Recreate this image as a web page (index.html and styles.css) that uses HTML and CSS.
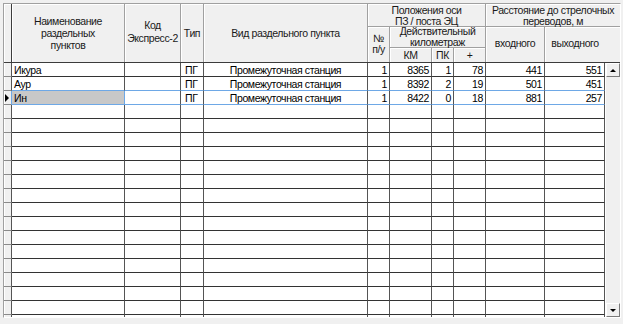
FILE: index.html
```html
<!DOCTYPE html>
<html lang="ru">
<head>
<meta charset="utf-8">
<title>Раздельные пункты</title>
<link rel="stylesheet" href="styles.css">
</head>
<body>
<div class="frame">
  <div class="head">
    <div class="hc h-ind"></div>
    <div class="hc h-name">Наименование<br>раздельных<br>пунктов</div>
    <div class="hc h-code">Код<br>Экспресс-2</div>
    <div class="hc h-type">Тип</div>
    <div class="hc h-kind">Вид раздельного пункта</div>
    <div class="hc h-pos">Положения оси<br>ПЗ / поста ЭЦ</div>
    <div class="hc h-num">№<br>п/у</div>
    <div class="hc h-km">Действительный<br>километраж</div>
    <div class="hc h-k">КМ</div>
    <div class="hc h-pk">ПК</div>
    <div class="hc h-plus">+</div>
    <div class="hc h-dist">Расстояние до стрелочных<br>переводов, м</div>
    <div class="hc h-in">входного</div>
    <div class="hc h-out">выходного</div>
  </div>
  <div class="body">
    <div class="rows">
      <div class="row">
        <div class="c ind"></div><div class="c">Икура</div><div class="c"></div><div class="c t">ПГ</div><div class="c m">Промежуточная станция</div><div class="c r">1</div><div class="c r">8365</div><div class="c r">1</div><div class="c r">78</div><div class="c r">441</div><div class="c r">551</div>
      </div>
      <div class="row pre-sel">
        <div class="c ind"></div><div class="c">Аур</div><div class="c"></div><div class="c t">ПГ</div><div class="c m">Промежуточная станция</div><div class="c r">1</div><div class="c r">8392</div><div class="c r">2</div><div class="c r">19</div><div class="c r">501</div><div class="c r">451</div>
      </div>
      <div class="row sel">
        <div class="c ind cur"></div><div class="c focus">Ин</div><div class="c"></div><div class="c t">ПГ</div><div class="c m">Промежуточная станция</div><div class="c r">1</div><div class="c r">8422</div><div class="c r">0</div><div class="c r">18</div><div class="c r">881</div><div class="c r">257</div>
      </div>
      <div class="row"><div class="c ind"></div><div class="c"></div><div class="c"></div><div class="c"></div><div class="c"></div><div class="c"></div><div class="c"></div><div class="c"></div><div class="c"></div><div class="c"></div><div class="c"></div></div>
      <div class="row"><div class="c ind"></div><div class="c"></div><div class="c"></div><div class="c"></div><div class="c"></div><div class="c"></div><div class="c"></div><div class="c"></div><div class="c"></div><div class="c"></div><div class="c"></div></div>
      <div class="row"><div class="c ind"></div><div class="c"></div><div class="c"></div><div class="c"></div><div class="c"></div><div class="c"></div><div class="c"></div><div class="c"></div><div class="c"></div><div class="c"></div><div class="c"></div></div>
      <div class="row"><div class="c ind"></div><div class="c"></div><div class="c"></div><div class="c"></div><div class="c"></div><div class="c"></div><div class="c"></div><div class="c"></div><div class="c"></div><div class="c"></div><div class="c"></div></div>
      <div class="row"><div class="c ind"></div><div class="c"></div><div class="c"></div><div class="c"></div><div class="c"></div><div class="c"></div><div class="c"></div><div class="c"></div><div class="c"></div><div class="c"></div><div class="c"></div></div>
      <div class="row"><div class="c ind"></div><div class="c"></div><div class="c"></div><div class="c"></div><div class="c"></div><div class="c"></div><div class="c"></div><div class="c"></div><div class="c"></div><div class="c"></div><div class="c"></div></div>
      <div class="row"><div class="c ind"></div><div class="c"></div><div class="c"></div><div class="c"></div><div class="c"></div><div class="c"></div><div class="c"></div><div class="c"></div><div class="c"></div><div class="c"></div><div class="c"></div></div>
      <div class="row"><div class="c ind"></div><div class="c"></div><div class="c"></div><div class="c"></div><div class="c"></div><div class="c"></div><div class="c"></div><div class="c"></div><div class="c"></div><div class="c"></div><div class="c"></div></div>
      <div class="row"><div class="c ind"></div><div class="c"></div><div class="c"></div><div class="c"></div><div class="c"></div><div class="c"></div><div class="c"></div><div class="c"></div><div class="c"></div><div class="c"></div><div class="c"></div></div>
      <div class="row"><div class="c ind"></div><div class="c"></div><div class="c"></div><div class="c"></div><div class="c"></div><div class="c"></div><div class="c"></div><div class="c"></div><div class="c"></div><div class="c"></div><div class="c"></div></div>
      <div class="row"><div class="c ind"></div><div class="c"></div><div class="c"></div><div class="c"></div><div class="c"></div><div class="c"></div><div class="c"></div><div class="c"></div><div class="c"></div><div class="c"></div><div class="c"></div></div>
      <div class="row"><div class="c ind"></div><div class="c"></div><div class="c"></div><div class="c"></div><div class="c"></div><div class="c"></div><div class="c"></div><div class="c"></div><div class="c"></div><div class="c"></div><div class="c"></div></div>
      <div class="row"><div class="c ind"></div><div class="c"></div><div class="c"></div><div class="c"></div><div class="c"></div><div class="c"></div><div class="c"></div><div class="c"></div><div class="c"></div><div class="c"></div><div class="c"></div></div>
      <div class="row"><div class="c ind"></div><div class="c"></div><div class="c"></div><div class="c"></div><div class="c"></div><div class="c"></div><div class="c"></div><div class="c"></div><div class="c"></div><div class="c"></div><div class="c"></div></div>
      <div class="row"><div class="c ind"></div><div class="c"></div><div class="c"></div><div class="c"></div><div class="c"></div><div class="c"></div><div class="c"></div><div class="c"></div><div class="c"></div><div class="c"></div><div class="c"></div></div>
      <div class="row"><div class="c ind"></div><div class="c"></div><div class="c"></div><div class="c"></div><div class="c"></div><div class="c"></div><div class="c"></div><div class="c"></div><div class="c"></div><div class="c"></div><div class="c"></div></div>
    </div>
    <div class="sb">
      <div class="sb-btn"><span class="arr-up"></span></div>
      <div class="sb-track"></div>
      <div class="sb-btn"><span class="arr-down"></span></div>
    </div>
  </div>
</div>
</body>
</html>
```

FILE: styles.css
```css
* { box-sizing: border-box; }

html, body {
  margin: 0;
  padding: 0;
  background: #f0f0f0;
  font-family: "Liberation Sans", Arial, sans-serif;
  font-size: 10.5px;
  letter-spacing: -0.4px;
  color: #000;
}

/* sunken grid frame */
.frame {
  margin: 3px 0 0 3px;
  width: 618px;
  height: 315px;
  border: 1px solid;
  border-color: #a0a0a0 #ffffff #ffffff #a0a0a0;
  background: #fff;
  display: flex;
  flex-direction: column;
}

/* ---- column header ---- */
.head {
  display: grid;
  grid-template-columns: 8px 113px 56px 23px 164px 22px 42px 22px 32px 59px 75px;
  grid-template-rows: 23px 21px 14px;
  border-bottom: 1px solid #3c3c3c;
  background: #f0f0f0;
}

.hc {
  display: flex;
  align-items: center;
  justify-content: center;
  text-align: center;
  line-height: 11px;
  border-right: 1px solid #a0a0a0;
  border-bottom: 1px solid #a0a0a0;
  box-shadow: inset 1px 1px 0 #ffffff;
  color: #1a1a1a;
  white-space: nowrap;
}

.h-ind  { grid-column: 1; grid-row: 1 / 4; border-right-color: #3c3c3c; }
.h-name { grid-column: 2; grid-row: 1 / 4; line-height: 12px; }
.h-code { grid-column: 3; grid-row: 1 / 4; line-height: 13px; padding-bottom: 3px; }
.h-type { grid-column: 4; grid-row: 1 / 4; }
.h-kind { grid-column: 5; grid-row: 1 / 4; }
.h-pos  { grid-column: 6 / 10; grid-row: 1; padding-top: 1px; }
.h-num  { grid-column: 6; grid-row: 2 / 4; padding-bottom: 2px; }
.h-km   { grid-column: 7 / 10; grid-row: 2; }
.h-k    { grid-column: 7; grid-row: 3; }
.h-pk   { grid-column: 8; grid-row: 3; }
.h-plus { grid-column: 9; grid-row: 3; }
.h-dist { grid-column: 10 / 12; grid-row: 1; border-right: none; padding-top: 1px; }
.h-in   { grid-column: 10; grid-row: 2 / 4; padding-bottom: 2px; }
.h-out  { grid-column: 11; grid-row: 2 / 4; padding-right: 15px; padding-bottom: 2px; border-right: none; }

.h-name, .h-code, .h-type, .h-kind, .h-num, .h-in, .h-out, .h-ind,
.h-k, .h-pk, .h-plus { border-bottom: none; }

/* ---- data area ---- */
.body {
  flex: 1;
  display: flex;
  min-height: 0;
}

.rows {
  width: 601px;
  overflow: hidden;
  background: #fff;
}

.row {
  display: grid;
  grid-template-columns: 8px 113px 56px 23px 164px 22px 42px 22px 32px 59px 60px;
  height: 14px;
}

.c {
  height: 14px;
  line-height: 14px;
  padding: 0 2px;
  white-space: nowrap;
  overflow: hidden;
  border-right: 1px solid #555555;
  border-bottom: 1px solid #333333;
}

.c.r { text-align: right; }
.c.m { text-align: center; }
.c.t { padding-left: 4px; }

.ind {
  background: #f0f0f0;
  box-shadow: inset 1px 0 0 #ffffff;
  border-bottom-color: #8a8a8a;
  position: relative;
}

/* current-record marker */
.ind.cur::before {
  content: "";
  position: absolute;
  left: 1px;
  top: 3px;
  border-left: 4px solid #000;
  border-top: 4px solid transparent;
  border-bottom: 4px solid transparent;
}

/* selected record: blue row lines */
.row.pre-sel .c:not(.ind),
.row.sel .c:not(.ind) {
  border-bottom-color: #6ea8e6;
}

.row.sel .c.ind { border-right-color: #6ea8e6; }

.c.focus {
  background: #c8c8c8;
  border-right-color: #6ea8e6;
}

/* ---- vertical scroll bar ---- */
.sb {
  width: 15px;
  display: flex;
  flex-direction: column;
  background: #f0f0f0;
  border-left: 1px solid #ffffff;
}

.sb-track { flex: 1; }

.sb-btn {
  height: 14px;
  display: flex;
  align-items: center;
  justify-content: center;
  background: #f0f0f0;
  border: 1px solid;
  border-color: #ffffff #7a7a7a #7a7a7a #ffffff;
}

.arr-up {
  width: 0;
  height: 0;
  border-left: 3px solid transparent;
  border-right: 3px solid transparent;
  border-bottom: 3px solid #000;
}

.arr-down {
  width: 0;
  height: 0;
  border-left: 3px solid transparent;
  border-right: 3px solid transparent;
  border-top: 3px solid #000;
}
```
